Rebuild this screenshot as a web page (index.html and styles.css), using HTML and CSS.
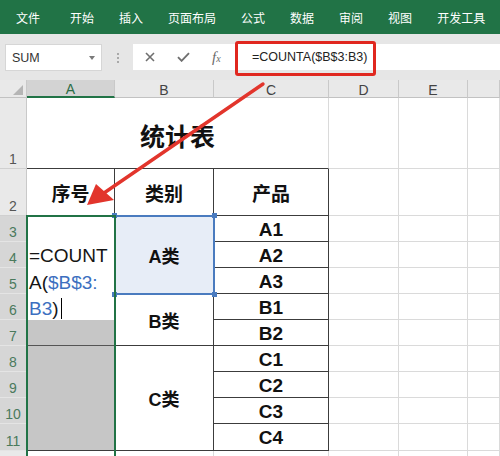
FILE: index.html
```html
<!DOCTYPE html>
<html lang="zh">
<head>
<meta charset="utf-8">
<title>统计表</title>
<link rel="stylesheet" href="styles.css">
</head>
<body>
<div class="ribbon">
  <span class="tab first">文件</span><span class="tab">开始</span><span class="tab">插入</span><span class="tab">页面布局</span><span class="tab">公式</span><span class="tab">数据</span><span class="tab">审阅</span><span class="tab">视图</span><span class="tab">开发工具</span>
</div>
<div class="fbar">
  <div class="namebox"><span>SUM</span><span class="caret"></span></div>
  <div class="grip"><i></i><i></i><i></i></div>
  <div class="fbox">
    <div class="fbtns">
      <svg class="ico" width="10" height="10" viewBox="0 0 10 10"><path d="M1 1L9 9M9 1L1 9" stroke="#6f6f6f" stroke-width="1.6" fill="none"/></svg>
      <svg class="ico" width="13" height="10" viewBox="0 0 13 10"><path d="M1 5.2L4.6 8.8L12 1.2" stroke="#6f6f6f" stroke-width="1.9" fill="none"/></svg>
      <span class="fx">f<span class="fxx">x</span></span>
    </div>
    <div class="ftext">=COUNTA($B$3:B3)</div>
  </div>
</div>
<div class="sheet">
  <div class="ch corner"><i class="tri"></i></div>
  <div class="ch sel">A</div><div class="ch">B</div><div class="ch">C</div><div class="ch">D</div><div class="ch">E</div><div class="ch"></div>

  <div class="rh">1</div>
  <div class="c title dk-b">统计表</div>
  <div class="c"></div><div class="c"></div><div class="c"></div>

  <div class="rh">2</div>
  <div class="c hd dk-r dk-b">序号</div>
  <div class="c hd dk-r dk-b">类别</div>
  <div class="c hd dk-r dk-b">产品</div>
  <div class="c"></div><div class="c"></div><div class="c"></div>

  <div class="rh sel">3</div>
  <div class="c amerge dk-r dk-b">
    <div class="edit">=COUNT<br>A(<span class="ref">$B$3:</span><br><span class="ref">B3</span>)<span class="cursor"></span></div>
    <div class="gray1"></div>
    <div class="gray2"></div>
  </div>
  <div class="c cat span3 blue dk-r dk-b">A类</div>
  <div class="c prod dk-r dk-b">A1</div>
  <div class="c"></div><div class="c"></div><div class="c"></div>

  <div class="rh sel">4</div>
  <div class="c prod dk-r dk-b">A2</div>
  <div class="c"></div><div class="c"></div><div class="c"></div>

  <div class="rh sel">5</div>
  <div class="c prod dk-r dk-b">A3</div>
  <div class="c"></div><div class="c"></div><div class="c"></div>

  <div class="rh sel">6</div>
  <div class="c cat span2 dk-r dk-b">B类</div>
  <div class="c prod dk-r dk-b">B1</div>
  <div class="c"></div><div class="c"></div><div class="c"></div>

  <div class="rh sel">7</div>
  <div class="c prod dk-r dk-b">B2</div>
  <div class="c"></div><div class="c"></div><div class="c"></div>

  <div class="rh sel">8</div>
  <div class="c cat span4 dk-r dk-b">C类</div>
  <div class="c prod dk-r dk-b">C1</div>
  <div class="c"></div><div class="c"></div><div class="c"></div>

  <div class="rh sel">9</div>
  <div class="c prod dk-r dk-b">C2</div>
  <div class="c"></div><div class="c"></div><div class="c"></div>

  <div class="rh sel">10</div>
  <div class="c prod dk-r dk-b">C3</div>
  <div class="c"></div><div class="c"></div><div class="c"></div>

  <div class="rh sel">11</div>
  <div class="c prod dk-r dk-b">C4</div>
  <div class="c"></div><div class="c"></div><div class="c"></div>

  <div class="rh"></div>
  <div class="c"></div><div class="c"></div><div class="c"></div><div class="c"></div><div class="c"></div><div class="c"></div>
</div>

<div class="redbox"></div>
<div class="sel-blue"><i class="h tl"></i><i class="h tr"></i><i class="h bl"></i><i class="h br"></i></div>
<div class="sel-green"></div>
<svg class="arrow" width="500" height="456" viewBox="0 0 500 456">
  <line x1="263" y1="84" x2="104" y2="193" stroke="#e2352c" stroke-width="3.4" stroke-linecap="round"/>
  <polygon points="87,205 96,184 114,200" fill="#e2352c"/>
</svg>
</body>
</html>
```

FILE: styles.css
```css
* { box-sizing: border-box; }

body {
  margin: 0;
  width: 500px;
  height: 456px;
  overflow: hidden;
  position: relative;
  background: #fff;
  font-family: "Liberation Sans", "Noto Sans CJK SC", sans-serif;
}

/* Ribbon */
.ribbon {
  height: 34px;
  background: #217346;
  display: flex;
  align-items: center;
  gap: 25px;
  padding-left: 16px;
  color: #fff;
  font-family: "Noto Sans CJK SC", sans-serif;
  font-size: 12px;
}
.ribbon .first { margin-right: 5px; }

/* Formula bar */
.fbar {
  height: 46px;
  background: #e6e6e6;
  display: flex;
  align-items: flex-start;
  padding-top: 10px;
}
.namebox {
  margin-left: 5px;
  width: 97px;
  height: 27px;
  background: #fff;
  border: 1px solid #d6d6d6;
  display: flex;
  align-items: center;
  justify-content: space-between;
  padding: 0 6px 0 6px;
  font-size: 12.5px;
  color: #333;
}
.caret {
  width: 0;
  height: 0;
  border-left: 3.5px solid transparent;
  border-right: 3.5px solid transparent;
  border-top: 4px solid #7a7a7a;
}
.grip {
  width: 31px;
  height: 27px;
  display: flex;
  flex-direction: column;
  align-items: center;
  justify-content: center;
  gap: 2px;
}
.grip i {
  display: block;
  width: 2px;
  height: 2px;
  background: #a9a9a9;
}
.fbox {
  flex: 1;
  height: 26px;
  background: #fff;
  display: flex;
  align-items: center;
}
.fbtns {
  width: 103px;
  height: 100%;
  display: flex;
  align-items: center;
  padding-left: 12px;
  gap: 22px;
}
.ico { display: block; }
.fx {
  font-family: "Liberation Serif", serif;
  font-style: italic;
  font-size: 15px;
  color: #6a6a6a;
  line-height: 1;
}
.fxx { font-size: 10px; }
.ftext {
  padding-left: 16px;
  font-size: 12.5px;
  color: #222;
}

/* Sheet grid */
.sheet {
  display: grid;
  grid-template-columns: 27px 88px 99px 115px 70px 69px 32px;
  grid-template-rows: 18px 71px 47px repeat(8, 26px) 27px 20px;
}
.ch {
  background: #e9e9e9;
  border-right: 1px solid #c9c9c9;
  border-bottom: 1px solid #c2c2c2;
  display: flex;
  justify-content: center;
  align-items: center;
  padding-top: 2px;
  font-size: 14px;
  color: #444;
}
.ch.sel {
  background: #d3d3d3;
  border-bottom: 2px solid #217346;
  color: #2c6b45;
}
.corner {
  align-items: flex-end;
  justify-content: flex-end;
  padding: 0 3px 2px 0;
}
.tri {
  display: block;
  width: 0;
  height: 0;
  border-left: 10px solid transparent;
  border-bottom: 10px solid #b5b5b5;
}
.rh {
  background: #e9e9e9;
  border-right: 1px solid #c9c9c9;
  border-bottom: 1px solid #d0d0d0;
  display: flex;
  justify-content: center;
  align-items: flex-end;
  padding-bottom: 2px;
  font-size: 14px;
  line-height: 14px;
  color: #555;
}
.rh.sel {
  background: #d6d6d6;
  border-bottom-color: #e4e4e4;
  color: #4a7a5c;
}
.c {
  background: #fff;
  border-right: 1px solid #dadada;
  border-bottom: 1px solid #dadada;
}
.dk-r { border-right-color: #3c3c3c; }
.dk-b { border-bottom-color: #3c3c3c; }

.title {
  grid-column: span 3;
  display: flex;
  justify-content: center;
  align-items: center;
  padding-top: 4px;
  font-family: "Noto Sans CJK SC", sans-serif;
  font-size: 25px;
  font-weight: bold;
  color: #111;
}
.hd {
  display: flex;
  justify-content: center;
  align-items: center;
  padding-top: 1px;
  font-family: "Noto Sans CJK SC", sans-serif;
  font-size: 19px;
  font-weight: bold;
  color: #111;
}
.amerge {
  grid-row: span 9;
  display: flex;
  flex-direction: column;
}
.edit {
  height: 104px;
  flex: none;
  padding: 27px 0 0 2px;
  font-size: 19px;
  line-height: 26.5px;
  color: #151515;
  white-space: nowrap;
}
.edit .ref { color: #3c6fc0; }
.cursor {
  display: inline-block;
  width: 1px;
  height: 21px;
  margin-left: 2px;
  background: #000;
  vertical-align: -4px;
}
.gray1 {
  height: 26px;
  flex: none;
  background: #c6c6c6;
  border-bottom: 1px solid #555;
}
.gray2 {
  flex: 1;
  background: #c6c6c6;
}
.cat {
  display: flex;
  justify-content: center;
  align-items: center;
  font-size: 18px;
  font-weight: bold;
  color: #111;
}
.span2 { grid-row: span 2; }
.span3 { grid-row: span 3; }
.span4 { grid-row: span 4; }
.blue { background: #e7edf7; }
.prod {
  display: flex;
  justify-content: center;
  align-items: center;
  padding-top: 2px;
  font-size: 19px;
  font-weight: bold;
  color: #111;
}

/* Overlays */
.redbox {
  position: absolute;
  left: 235px;
  top: 41px;
  width: 141px;
  height: 35px;
  border: 3px solid #e0271f;
  border-radius: 3px;
}
.sel-blue {
  position: absolute;
  left: 114px;
  top: 215px;
  width: 101px;
  height: 80px;
  border: 2px solid #4a7bbf;
}
.h {
  position: absolute;
  width: 5px;
  height: 5px;
  background: #4a7bbf;
}
.tl { left: -4px; top: -4px; }
.tr { right: -4px; top: -4px; }
.bl { left: -4px; bottom: -4px; }
.br { right: -4px; bottom: -4px; }
.sel-green {
  position: absolute;
  left: 26px;
  top: 215px;
  width: 90px;
  height: 260px;
  border: 2px solid #217346;
  border-bottom: none;
}
.arrow {
  position: absolute;
  left: 0;
  top: 0;
  pointer-events: none;
}
```
